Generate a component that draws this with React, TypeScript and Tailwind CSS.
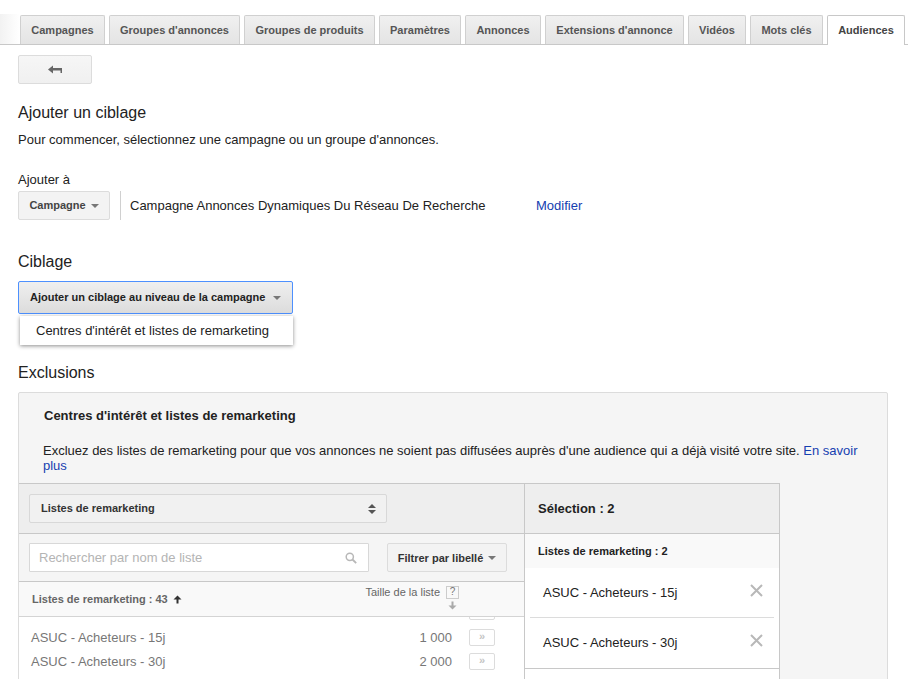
import type { ReactNode } from "react";

const TABS = [
  { label: "Campagnes", width: "w-[85px]" },
  { label: "Groupes d'annonces", width: "w-[131px]" },
  { label: "Groupes de produits", width: "w-[131px]" },
  { label: "Paramètres", width: "w-[82px]" },
  { label: "Annonces", width: "w-[76px]" },
  { label: "Extensions d'annonce", width: "w-[139px]" },
  { label: "Vidéos", width: "w-[58px]" },
  { label: "Mots clés", width: "w-[73px]" },
];

const LIST_ROWS = [
  { name: "ASUC - Acheteurs - 15j", size: "1 000" },
  { name: "ASUC - Acheteurs - 30j", size: "2 000" },
];

function Caret({ className }: { className: string }) {
  return <span className={`inline-block h-0 w-0 border-x-[4px] border-t-[4px] border-x-transparent ${className}`} />;
}

function AddButton({ children }: { children?: ReactNode }) {
  return (
    <div className="flex h-[17px] w-[26px] items-center justify-center rounded-[2px] border border-[#dcdcdc] bg-white pb-[2px] text-[11px] font-bold text-[#c4c4c4]">
      {children}
    </div>
  );
}

function RemoveIcon() {
  return (
    <svg width="13" height="13" viewBox="0 0 13 13" className="shrink-0">
      <path d="M1 1l11 11M12 1L1 12" stroke="#b8b8b8" strokeWidth="2" fill="none" />
    </svg>
  );
}

export default function App() {
  return (
    <div className="h-[679px] w-[908px] overflow-hidden bg-white font-['Liberation_Sans',Arial,sans-serif] text-[13px] text-[#222]">
      {/* Tab strip */}
      <div className="relative flex h-[45px] gap-1 border-b border-[#c8c8c8] pl-5 pt-[15px]">
        <div className="absolute bottom-0 left-0 h-[30px] w-5 bg-gradient-to-r from-[#f2f2f2] to-white" />
        {TABS.map((tab) => (
          <div
            key={tab.label}
            className={`${tab.width} flex h-[29px] shrink-0 items-center justify-center rounded-t-[2px] border border-b-0 border-[#d0d0d0] bg-gradient-to-b from-[#f0f0f0] to-[#e4e4e4] text-[11px] font-bold text-[#555]`}
          >
            {tab.label}
          </div>
        ))}
        <div className="relative z-10 flex h-[30px] w-[78px] shrink-0 items-center justify-center rounded-t-[2px] border border-b-0 border-[#c8c8c8] bg-white text-[11px] font-bold text-[#444]">
          Audiences
        </div>
      </div>

      <div className="pl-[18px]">
        <button className="mt-[10px] flex h-[29px] w-[74px] items-center justify-center rounded-[2px] border border-[#dcdcdc] bg-gradient-to-b from-[#f6f6f6] to-[#f0f0f0]">
          <svg width="14" height="10" viewBox="0 0 14 10">
            <path d="M0 4.5L5 0.5V3H14V8H12.5V5.5H5V8.5Z" fill="#666" />
          </svg>
        </button>

        <h2 className="mt-[19px] text-[16px] leading-[20px] text-[#222]">Ajouter un ciblage</h2>
        <p className="mt-[9px] leading-[16px]">Pour commencer, sélectionnez une campagne ou un groupe d'annonces.</p>

        <p className="mt-[24px] leading-[16px]">Ajouter à</p>
        <div className="mt-[3px] flex h-[29px] items-center">
          <div className="flex h-[29px] w-[92px] items-center justify-center gap-[5px] rounded-[2px] border border-[#dcdcdc] bg-[#f3f3f3] text-[11px] font-bold text-[#444]">
            Campagne
            <Caret className="border-t-[#777]" />
          </div>
          <div className="ml-[10px] h-[29px] w-px bg-[#d0d0d0]" />
          <span className="ml-[9px] w-[406px]">Campagne Annonces Dynamiques Du Réseau De Recherche</span>
          <span className="text-[#1540b0]">Modifier</span>
        </div>

        <h2 className="mt-[32px] text-[16px] leading-[20px]">Ciblage</h2>

        <div className="relative mt-[9px]">
          <div className="flex h-[33px] w-[275px] items-center justify-between rounded-[2px] border border-[#4d90fe] bg-gradient-to-b from-[#efefef] to-[#dcdcdc] pl-[11px] pr-[11px] text-[11px] font-bold text-[#222]">
            Ajouter un ciblage au niveau de la campagne
            <Caret className="border-t-[#777]" />
          </div>
          <div className="absolute left-[2px] top-[35px] z-20 flex h-[29px] w-[273px] items-center bg-white pl-[16px] shadow-[0_1px_4px_rgba(0,0,0,0.45)]">
            Centres d'intérêt et listes de remarketing
          </div>
        </div>

        <h2 className="mt-[49px] text-[16px] leading-[20px]">Exclusions</h2>

        {/* Exclusions panel */}
        <div className="mt-[9px] h-[400px] w-[870px] rounded-[2px] border border-[#dcdcdc] bg-[#f5f5f5]">
          <h3 className="ml-[25px] mt-[15px] text-[13px] font-bold leading-[16px] text-[#222]">
            Centres d'intérêt et listes de remarketing
          </h3>
          <p className="ml-[24px] mt-[19px] w-[830px] text-[13px] leading-[15px]">
            Excluez des listes de remarketing pour que vos annonces ne soient pas diffusées auprès d'une audience qui a déjà visité votre site.{" "}
            <span className="text-[#1540b0]">En savoir plus</span>
          </p>

          <div className="mt-[10px] flex w-[761px] border-y border-r border-[#c8c8c8] bg-white">
            {/* Left column */}
            <div className="w-[506px] shrink-0 border-r border-[#c8c8c8]">
              <div className="flex h-[50px] items-center border-b border-[#c8c8c8] bg-[#eeeeee] pl-[10px]">
                <div className="flex h-[29px] w-[358px] items-center justify-between rounded-[2px] border border-[#d8d8d8] bg-[#f1f1f1] pl-[11px] pr-[10px] text-[11px] font-bold text-[#333]">
                  Listes de remarketing
                  <span className="flex flex-col gap-[2px]">
                    <span className="h-0 w-0 border-x-[4px] border-b-[4px] border-x-transparent border-b-[#555]" />
                    <span className="h-0 w-0 border-x-[4px] border-t-[4px] border-x-transparent border-t-[#555]" />
                  </span>
                </div>
              </div>
              <div className="flex h-[48px] items-center gap-[18px] border-b border-[#c8c8c8] bg-[#f5f5f5] pl-[10px]">
                <div className="flex h-[29px] w-[340px] items-center justify-between rounded-[1px] border border-[#d8d8d8] bg-white pl-[9px] pr-[11px] pt-px text-[#b4b4b4]">
                  Rechercher par nom de liste
                  <svg width="12" height="12" viewBox="0 0 12 12">
                    <circle cx="4.8" cy="4.8" r="3.6" fill="none" stroke="#b8b8b8" strokeWidth="1.5" />
                    <path d="M7.5 7.5L11.2 11.2" stroke="#b8b8b8" strokeWidth="1.8" />
                  </svg>
                </div>
                <div className="flex h-[29px] w-[120px] items-center justify-center gap-[5px] rounded-[2px] border border-[#dcdcdc] bg-[#f3f3f3] pt-px text-[11px] font-bold text-[#333]">
                  Filtrer par libellé
                  <Caret className="border-t-[#777]" />
                </div>
              </div>
              <div className="flex h-[35px] border-b border-[#d4d4d4] bg-[#f9f9f9] pl-[13px]">
                <div className="mt-[10px] flex h-[14px] w-[333px] items-center gap-[5px] text-[11px] font-bold text-[#666]">
                  Listes de remarketing : 43
                  <svg width="9" height="9" viewBox="0 0 9 9">
                    <path d="M4.5 0.5L8.5 4.5H5.5V8.5H3.5V4.5H0.5Z" fill="#333" />
                  </svg>
                </div>
                <div className="mt-[3px] flex w-[94px] flex-col items-end text-[11px] leading-[14px] text-[#666]">
                  <div className="flex items-center gap-[6px]">
                    Taille de la liste
                    <span className="flex h-[13px] w-[13px] items-center justify-center border border-[#ccc] text-[10px] text-[#777]">?</span>
                  </div>
                  <svg width="9" height="9" viewBox="0 0 9 9" className="mr-[2px] mt-[2px]">
                    <path d="M4.5 8.5L8.5 4.5H5.5V0.5H3.5V4.5H0.5Z" fill="#aaa" />
                  </svg>
                </div>
              </div>
              <div className="h-[100px] overflow-hidden bg-white pl-[12px] text-[#777]">
                <div className="-mt-[14px] flex h-[17px] justify-end pr-[29px]">
                  <AddButton />
                </div>
                <div className="mt-[9px] flex flex-col gap-[7px]">
                  {LIST_ROWS.map((row) => (
                    <div key={row.name} className="flex h-[17px] items-center text-[13px]">
                      <span className="w-[360px]">{row.name}</span>
                      <span className="w-[61px] text-right">{row.size}</span>
                      <span className="ml-[17px]">
                        <AddButton>»</AddButton>
                      </span>
                    </div>
                  ))}
                </div>
                <div className="mt-[9px] flex justify-end pr-[29px]">
                  <AddButton />
                </div>
              </div>
            </div>

            {/* Right column */}
            <div className="w-[254px] shrink-0">
              <div className="flex h-[50px] items-center border-b border-[#c8c8c8] bg-[#eeeeee] pl-[13px] text-[13px] font-bold text-[#222]">
                Sélection : 2
              </div>
              <div className="flex h-[34px] items-center bg-[#f9f9f9] pl-[13px] text-[11px] font-bold text-[#222]">
                Listes de remarketing : 2
              </div>
              <div className="px-[5px]">
                {LIST_ROWS.map((row, i) => (
                  <div
                    key={row.name}
                    className={`flex h-[50px] items-center justify-between pl-[13px] pr-[11px] ${i === 0 ? "border-b border-[#dcdcdc]" : ""}`}
                  >
                    <span className="text-[13px]">{row.name}</span>
                    <span className="-mt-[5px]">
                      <RemoveIcon />
                    </span>
                  </div>
                ))}
              </div>
              <div className="h-[20px] border-t border-[#c8c8c8]" />
            </div>
          </div>
        </div>
      </div>
    </div>
  );
}
